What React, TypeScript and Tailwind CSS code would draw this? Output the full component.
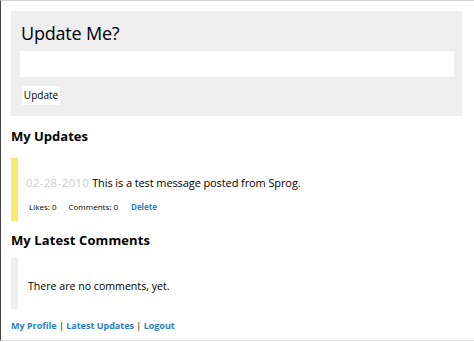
export default function App() {
  return (
    <div className="w-[474px] h-[342px] bg-white font-['Open_Sans',sans-serif] text-black">
      <div className="h-[341px] border-l border-l-[#444] border-t border-t-[#d0d0d0] border-b border-b-[#e2e2e2] pl-[10px] pt-[10px]">
        <div className="w-[451px] h-[105px] bg-[#eeeeee] pl-[9px] pt-[11px]">
          <h1 className="pl-[1px] text-[18px] leading-[22px] tracking-[-0.2px]">Update Me?</h1>
          <div className="mt-[7px] w-[434px] h-[26px] bg-white" />
          <button className="mt-[9px] ml-[2px] h-[19px] w-[38px] bg-white text-[10px] leading-[19px]">
            Update
          </button>
        </div>

        <h2 className="mt-[12px] text-[13px] font-bold leading-[16px]">My Updates</h2>
        <div className="mt-[14px] h-[63px] border-l-[7px] border-l-[#f9e96f] pl-[8px] pt-[17px]">
          <p className="text-[11px] leading-[16px] tracking-[-0.1px]">
            <span className="text-[#cccccc] tracking-[0.6px]">02-28-2010</span> This is a test message posted from Sprog.
          </p>
          <div className="mt-[10px] flex text-[8px] leading-[12px] pl-[3px]">
            <span>Likes: 0</span>
            <span className="ml-[12px]">Comments: 0</span>
            <a className="ml-[13px] font-bold text-[#2a86c4]">Delete</a>
          </div>
        </div>

        <h2 className="mt-[11px] text-[13px] font-bold leading-[16px] tracking-[0.1px]">My Latest Comments</h2>
        <div className="mt-[10px] h-[51px] border-l-[7px] border-l-[#eeeeee] pl-[10px] pt-[20px]">
          <p className="text-[10.6px] leading-[16px]">There are no comments, yet.</p>
        </div>

        <div className="mt-[10px] text-[9px] font-bold leading-[14px] text-[#2a7fbf]">
          <a>My Profile</a> <span className="text-black font-normal">|</span> <a>Latest Updates</a>{" "}
          <span className="text-black font-normal">|</span> <a>Logout</a>
        </div>
      </div>
    </div>
  );
}
